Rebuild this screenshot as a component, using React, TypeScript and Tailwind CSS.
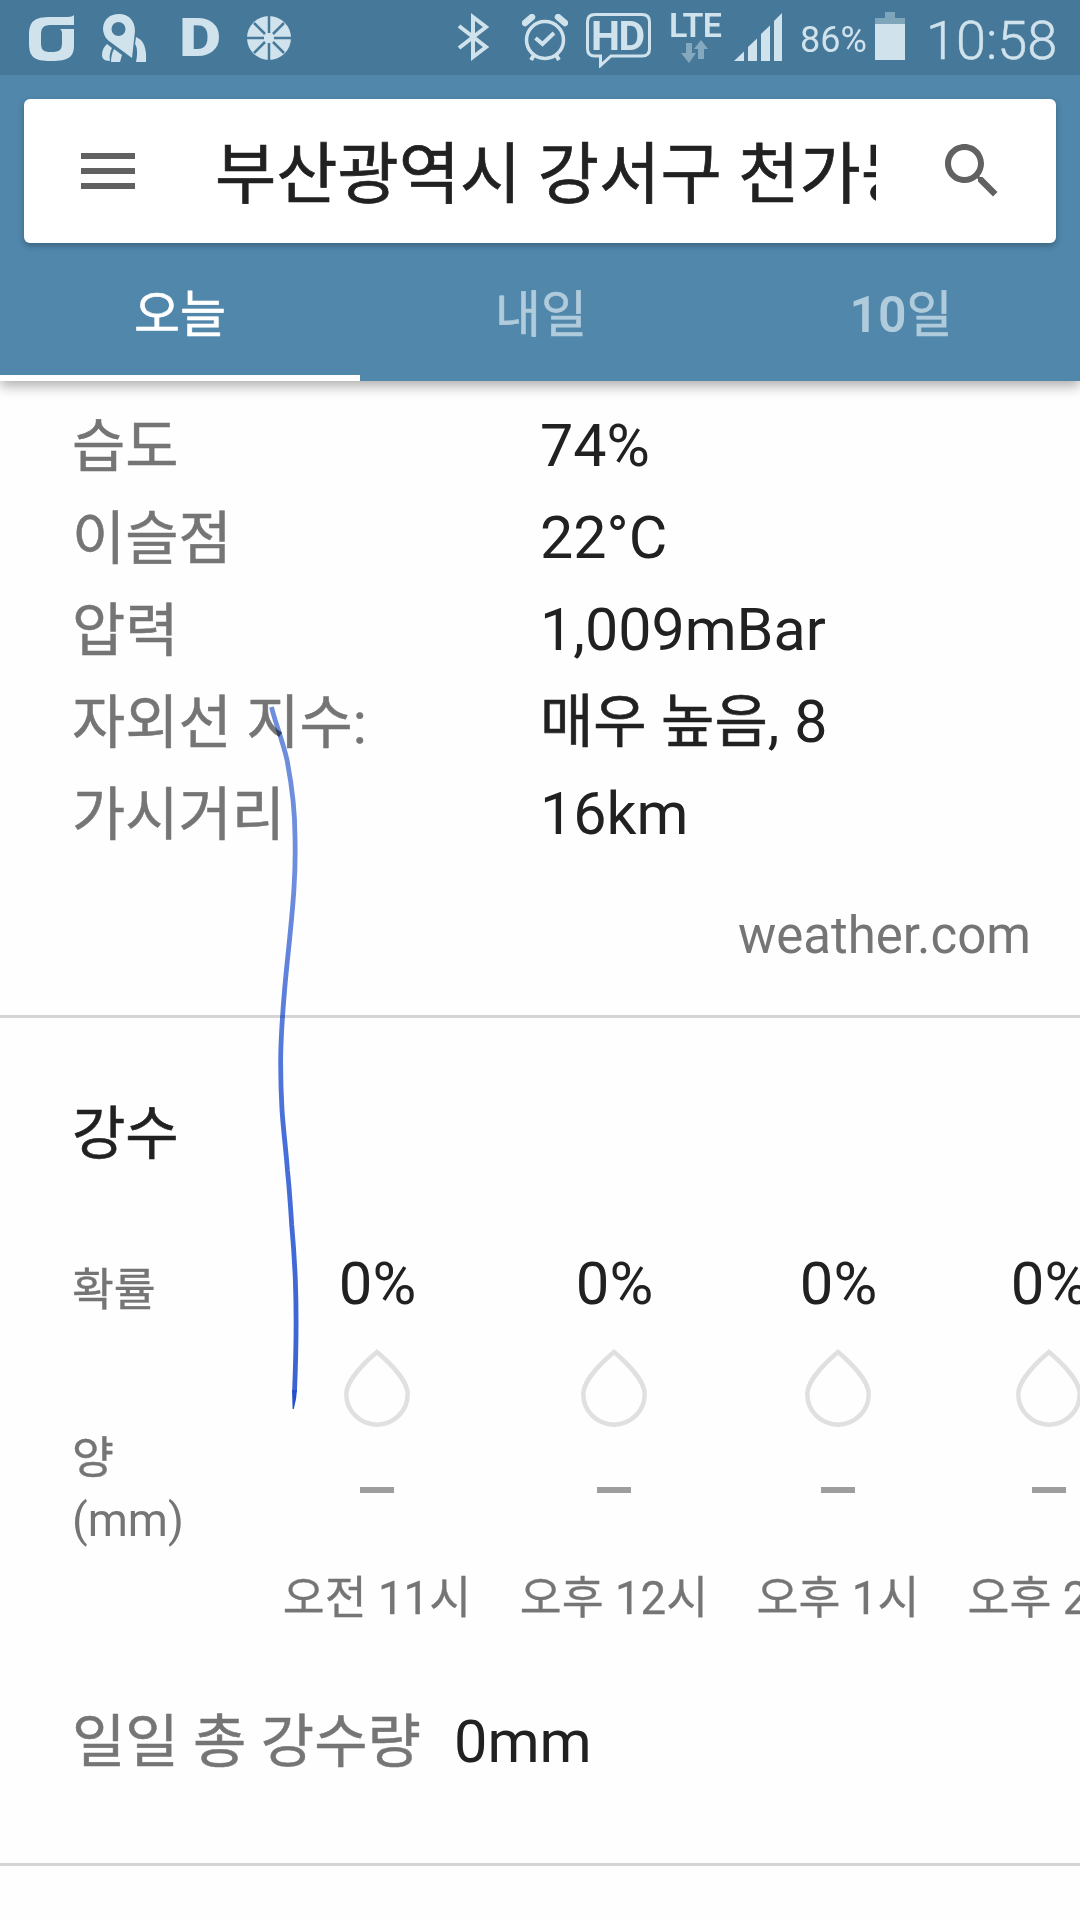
import React from "react";

const details = [
  { label: "습도", value: "74%" },
  { label: "이슬점", value: "22°C" },
  { label: "압력", value: "1,009mBar" },
  { label: "자외선 지수:", value: "매우 높음, 8" },
  { label: "가시거리", value: "16km" },
];

const hours = [
  { time: "오전 11시", chance: "0%", width: "w-[237px]" },
  { time: "오후 12시", chance: "0%", width: "w-[237px]" },
  { time: "오후 1시", chance: "0%", width: "w-[211px]" },
  { time: "오후 2시", chance: "0%", width: "w-[211px]" },
];

function StatusBar() {
  return (
    <div className="flex h-[75px] items-start bg-[#467899] text-[#d0e2ec]">
      <svg width="46" height="48" viewBox="0 0 46 48" className="ml-[29px] mt-[14px]" fill="currentColor">
        <path
          fillRule="evenodd"
          d="M45 1 V11 H24 C14 11 12 13 12 22 V28 C12 36 14 38 22 38 C31 38 33 36 33 28 V22 C33 18 33 16 31 15 H45 V31 C45 43 40 47 22 47 C5 47 0 43 0 29 V22 C0 7 5 3 22 3 H35 C40 3 43 3 45 1 Z"
        />
      </svg>

      <svg width="46" height="50" viewBox="0 0 46 50" className="ml-[27px] mt-[13px]" fill="currentColor">
        <path
          fillRule="evenodd"
          d="M17 1 C27 1 33 8 33 18 L30 45 L7 28 C3 25 1 20 1 15 C2 6 8 1 17 1 Z M16.500 9 A7 7 0 1 0 16.500 23 A7 7 0 1 0 16.500 9 Z"
        />
        <path d="M5 31 L10 35 C8 39 7 43 8 48 C2 48 0 45 0 42 C0 37 2 34 5 31 Z" />
        <path d="M12 36 L20 42 L18 49 H9 C9 44 10 40 12 36 Z" />
        <path d="M34 24 C42 27 45 36 44 49 H34 C36 40 35 33 33 31 Z" />
      </svg>

      <span className="ml-[31px] mt-[11px] inline-block w-[39px] origin-left scale-x-[1.23] text-[53px] font-black leading-[54px]">
        D
      </span>

      <svg width="44" height="44" viewBox="0 0 44 44" className="ml-[29px] mt-[16px]">
        <circle cx="22" cy="22" r="22" fill="currentColor" />
        <g stroke="#467899" strokeWidth="2.500">
          <path d="M22 0 V17 M22 27 V44 M0 22 H17 M27 22 H44" />
          <path d="M7 7 L18 18 M26 26 L37 37 M37 7 L26 18 M18 26 L7 37" />
        </g>
      </svg>

      <svg width="34" height="50" viewBox="0 0 34 50" className="ml-[166px] mt-[12px]" fill="none" stroke="currentColor" strokeWidth="4">
        <path d="M2 14 L29 35 L16 45 V5 L29 15 L2 36" />
      </svg>

      <svg width="46" height="48" viewBox="0 0 46 48" className="ml-[31px] mt-[14px]" fill="none" stroke="currentColor">
        <circle cx="23" cy="26" r="18.500" strokeWidth="3.500" />
        <path d="M13.500 24 L20.500 30 L32 19" strokeWidth="4" />
        <path d="M3 9 L10 3 M43 9 L36 3" strokeWidth="6.500" strokeLinecap="round" />
        <path d="M12 41 L9 46 M34 41 L37 46" strokeWidth="4" />
      </svg>

      <div className="relative ml-[18px] mt-[13px] h-[55px] w-[65px]">
        <svg width="65" height="55" viewBox="0 0 65 55" fill="none" stroke="currentColor" strokeWidth="3">
          <path d="M9 1.500 H56 Q63.500 1.500 63.500 9 V36 Q63.500 43 56 43 H25 L14.500 52.500 V43 H9 Q1.500 43 1.500 36 V9 Q1.500 1.500 9 1.500 Z" />
        </svg>
        <span className="absolute left-[5px] top-[2px] text-[41px] font-bold leading-[42px] tracking-[-1.500px]">HD</span>
      </div>

      <div className="ml-[17px] mt-[11px] flex w-[54px] flex-col items-center">
        <span className="text-[34px] font-semibold leading-[29px] tracking-[-0.800px]">LTE</span>
        <svg width="28" height="23" viewBox="0 0 28 23" className="fill-[#84a9be]">
          <path d="M5 3 H11 V13 H15 L8 23 L0 13 H5 Z" />
          <path d="M17 19 V9 H13 L20 0 L27 9 H23 V19 Z" />
        </svg>
      </div>

      <svg width="48" height="48" viewBox="0 0 48 48" className="ml-[12px] mt-[13px]" fill="currentColor">
        <path d="M0 48 L10 38.500 V48 Z" />
        <path d="M14 48 V34 L23 25.500 V48 Z" />
        <path d="M27 48 V21 L36 12.500 V48 Z" />
        <path d="M40 48 V8 L48 0 V48 Z" />
      </svg>

      <span className="ml-[18px] mt-[19px] w-[66px] text-[36px] leading-[43px]">86%</span>

      <svg width="30" height="48" viewBox="0 0 30 48" className="ml-[9px] mt-[12px]" fill="currentColor">
        <path d="M10 0 H20 V6 H30 V12 H0 V6 H10 Z" className="fill-[#7fa5bb]" />
        <path d="M0 12 H30 V48 H0 Z" />
      </svg>

      <span className="ml-[21px] mt-[11px] text-[54px] font-light leading-[60px] [-webkit-text-stroke:0.5px]">10:58</span>
    </div>
  );
}

function Drop() {
  return (
    <svg width="66" height="78" viewBox="0 0 66 78" fill="none" stroke="#e0e0e0" strokeWidth="4.500">
      <path d="M33 3 C20 14 2.300 32 2.300 45 A30.700 30.700 0 0 0 63.700 45 C63.700 32 46 14 33 3 Z" />
    </svg>
  );
}

// Pen stroke drawn over the page
function PenStroke() {
  return (
    <svg width="40" height="710" viewBox="265 703 40 710" className="pointer-events-none absolute left-[265px] top-[703px] z-20 mix-blend-multiply">
      <defs>
        <linearGradient id="ink" gradientUnits="userSpaceOnUse" x1="0" y1="707" x2="0" y2="1409">
          <stop offset="0" stopColor="#6e8ede" />
          <stop offset="0.25" stopColor="#6e8ede" />
          <stop offset="0.6" stopColor="#486fda" />
          <stop offset="1" stopColor="#3a63d3" />
        </linearGradient>
      </defs>
      <path
        d="M271.500 707 C275 722 283 742 287 760 C292 786 295 812 295 837 C295.500 858 295 872 294 888 C292 922 287 960 284.500 991 C282 1020 281 1036 280.700 1057 C280.500 1076 281 1092 282 1110 C283.500 1132 286 1150 287.500 1171 C289.500 1190 290.500 1206 291.700 1225 C293.500 1245 294.500 1260 295.300 1279 C296.500 1310 296.500 1345 294.500 1392"
        fill="none"
        stroke="url(#ink)"
        strokeWidth="4.800"
      />
      <path d="M292 1390 H297 L296 1399 L293.800 1409 H292.600 Z" fill="#2450cc" />
    </svg>
  );
}

export default function App() {
  return (
    <div className="relative flex h-[1920px] w-[1080px] flex-col overflow-hidden bg-[#fefefe] font-['Roboto','Noto_Sans_CJK_KR',sans-serif] text-[#212121]">
      <div className="relative z-10 h-[381px] shrink-0 bg-[#5087ab] shadow-[0_5px_12px_rgba(0,0,0,0.32)]">
        <StatusBar />

        <div className="mx-6 mt-6 flex h-[144px] items-center rounded-[6px] bg-white shadow-[0_3px_6px_rgba(0,0,0,0.25)]">
          <div className="ml-[57px] flex w-[54px] flex-col gap-[9px]">
            <div className="h-[6px] bg-[#616161]"></div>
            <div className="h-[6px] bg-[#616161]"></div>
            <div className="h-[6px] bg-[#616161]"></div>
          </div>
          <div className="ml-[80px] w-[661px] overflow-hidden whitespace-nowrap pt-[8px] text-[66.6px] leading-[90px] [-webkit-text-stroke:0.7px]">
            부산광역시 강서구 천가동
          </div>
          <svg width="72" height="72" viewBox="0 0 24 24" className="ml-[60px]" fill="#616161">
            <path d="M15.500 14h-.79l-.28-.27C15.410 12.590 16 11.110 16 9.500 16 5.910 13.090 3 9.500 3S3 5.910 3 9.500 5.910 16 9.500 16c1.610 0 3.090-.59 4.230-1.570l.27.28v.79l5 4.990L20.490 19l-4.990-5zm-6 0C7.010 14 5 11.990 5 9.500S7.010 5 9.500 5 14 7.010 14 9.500 11.990 14 9.500 14z" />
          </svg>
        </div>

        <div className="grid h-[138px] grid-cols-3 text-center text-[50px] leading-[118px] text-[#b0cbdb]">
          <div className="border-b-[6px] border-white pt-[13px] text-white [-webkit-text-stroke:0.6px]">오늘</div>
          <div className="pl-[2px] pt-[13px] [-webkit-text-stroke:0.6px]">내일</div>
          <div className="pl-[2px] pt-[13px] font-semibold">
            10<span className="font-normal [-webkit-text-stroke:0.6px]">일</span>
          </div>
        </div>
      </div>

      <div className="mt-[19px] flex flex-col pl-[72px]">
        {details.map((item) => (
          <div key={item.label} className="flex h-[92px] leading-[92px]">
            <div className="w-[468px] pt-px text-[57.9px] text-[#757575] [-webkit-text-stroke:0.5px]">{item.label}</div>
            <div className="text-[59.2px]">
              {item.label === "자외선 지수:" ? (
                <>
                  <span className="text-[58px] [-webkit-text-stroke:0.6px]">매우 높음</span>, 8
                </>
              ) : (
                item.value
              )}
            </div>
          </div>
        ))}
      </div>

      <div className="mt-[46px] pr-[49px] text-right text-[51px] leading-[60px] text-[#757575]">weather.com</div>
      <div className="mt-[49px] h-[3px] shrink-0 bg-[#d4d4d4]"></div>

      <div className="mt-[76px] pl-[72px] text-[58px] leading-[80px] [-webkit-text-stroke:0.6px]">강수</div>

      <div className="mt-[75px] flex h-[394px] shrink-0">
        <div className="flex w-[258px] shrink-0 flex-col pl-[72px] text-[45.5px] leading-[63px] text-[#757575]">
          <div className="mt-[10px] [-webkit-text-stroke:0.4px]">확률</div>
          <div className="mt-[105px] [-webkit-text-stroke:0.4px]">양</div>
          <div className="-mt-px text-[45.8px]">(mm)</div>
        </div>
        <div className="flex">
          {hours.map((hour) => (
            <div key={hour.time} className={"flex shrink-0 flex-col items-center " + hour.width}>
              <div className="pl-[2px] text-[59.8px] leading-[70px]">{hour.chance}</div>
              <div className="mt-[30px]">
                <Drop />
              </div>
              <div className="mt-[60px] h-[6px] w-[34px] bg-[#9e9e9e]"></div>
              <div className="mt-[76px] whitespace-nowrap pl-px text-[45.6px] leading-[60px] text-[#757575] [-webkit-text-stroke:0.3px]">{hour.time}</div>
            </div>
          ))}
        </div>
      </div>

      <div className="mt-[59px] flex items-baseline pl-[72px] leading-[80px]">
        <div className="text-[58px] text-[#757575] [-webkit-text-stroke:0.5px]">일일 총 강수량</div>
        <div className="ml-[33px] text-[59.5px]">0mm</div>
      </div>
      <div className="mt-[81px] h-[3px] shrink-0 bg-[#d4d4d4]"></div>

      <PenStroke />
    </div>
  );
}
